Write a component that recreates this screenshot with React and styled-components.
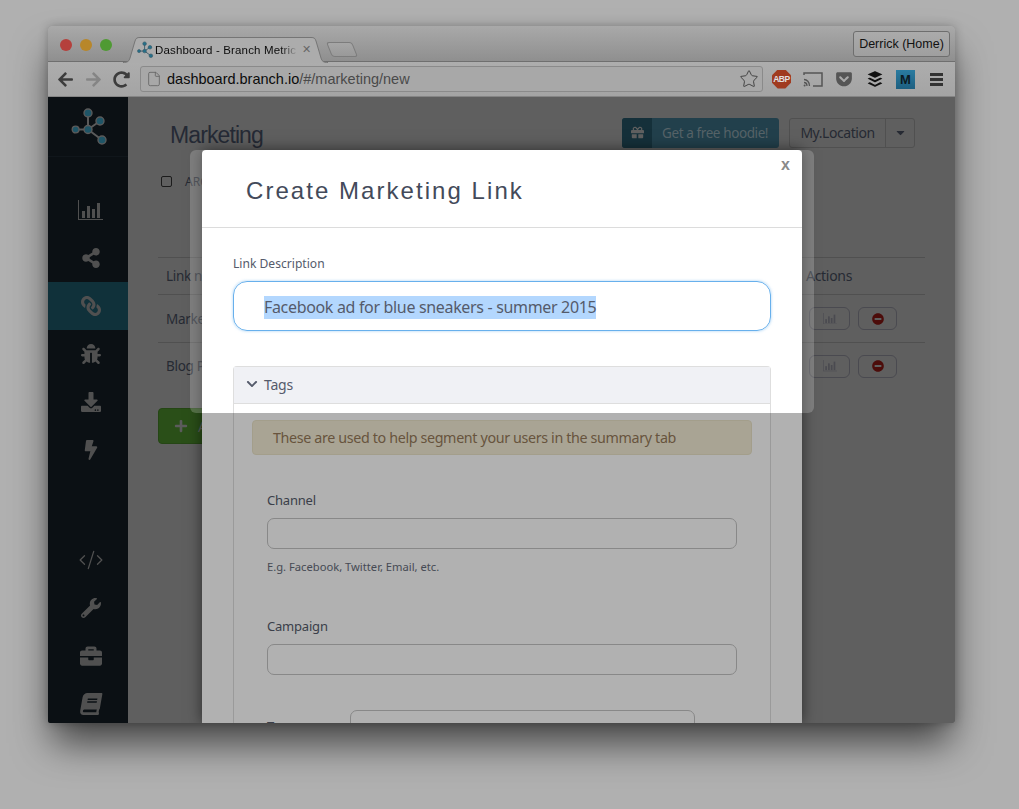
import styled, { createGlobalStyle } from 'styled-components';
import {
  FaArrowLeft,
  FaArrowRight,
  FaBolt,
  FaBook,
  FaBriefcase,
  FaBug,
  FaBuffer,
  FaCaretDown,
  FaChevronDown,
  FaDownload,
  FaGetPocket,
  FaGift,
  FaLink,
  FaMinusCircle,
  FaPlus,
  FaRedoAlt,
  FaShareAlt,
  FaWrench,
} from 'react-icons/fa';
import { CodeXml, File, Star } from 'lucide-react';

const bodyFont = `'Noto Sans', 'Liberation Sans', sans-serif`;

const GlobalStyle = createGlobalStyle`
  html, body {
    margin: 0;
    background: #b0b0b0;
    height: 809px;
    overflow: hidden;
  }
  * { box-sizing: border-box; }
`;

const Page = styled.div`
  padding: 26px 0 0 48px;
`;

const Window = styled.div`
  width: 907px;
  height: 697px;
  border-radius: 5px 5px 2px 2px;
  box-shadow: 0 24px 38px -4px rgba(0, 0, 0, 0.62), 0 0 10px rgba(0, 0, 0, 0.25);
  display: flex;
  flex-direction: column;
  overflow: hidden;
`;

const TitleBar = styled.div`
  height: 36px;
  flex: none;
  background: linear-gradient(#a9a9a9, #8f8f8f);
  border-bottom: 1px solid #6f6f6f;
  display: flex;
  align-items: flex-end;
  padding: 0 5px 0 12px;
`;

const Light = styled.span`
  width: 12px;
  height: 12px;
  border-radius: 50%;
  background: ${(p) => p.$color};
  margin-right: 8px;
  align-self: center;
  flex: none;
  position: relative;
  top: 1px;
`;

const Tab = styled.div`
  width: 198px;
  height: 25px;
  margin: 0 0 -1px 8px;
  position: relative;
  display: flex;
  align-items: center;
  padding-left: 9px;
  font: 11.5px 'Liberation Sans', sans-serif;
  letter-spacing: 0.15px;
  color: #0c0c0c;
  & > * {
    position: relative;
  }
`;

const TabShape = styled.svg`
  && {
    position: absolute;
  }
  left: -5px;
  top: 0;
`;

const TabTitle = styled.span`
  width: 143px;
  flex: none;
  margin-left: 1px;
  white-space: nowrap;
  overflow: hidden;
  -webkit-mask-image: linear-gradient(to right, #000 88%, transparent);
  mask-image: linear-gradient(to right, #000 88%, transparent);
`;

const TabClose = styled.span`
  margin-left: 4px;
  font-size: 11px;
  color: #666;
`;

const NewTab = styled.div`
  width: 26px;
  height: 15px;
  margin: 0 0 4px 3px;
  background: linear-gradient(#a6a6a6, #999);
  border: 1px solid #7c7c7c;
  border-radius: 3px;
  transform: skewX(22deg);
`;

const Profile = styled.div`
  margin: 0 0 4px auto;
  width: 97px;
  height: 26px;
  border: 1px solid #6e6e6e;
  border-radius: 3px;
  background: linear-gradient(#ababab, #9f9f9f);
  font: 12.5px/24px 'Liberation Sans', sans-serif;
  text-align: center;
  color: #111;
`;

const Toolbar = styled.div`
  height: 35px;
  flex: none;
  background: linear-gradient(#adadad, #a4a4a4);
  border-bottom: 1px solid #858585;
  display: flex;
  align-items: center;
  padding-left: 9px;
`;

const NavBtn = styled.span`
  width: 28px;
  flex: none;
  display: flex;
  color: ${(p) => p.$color || '#3c3c3c'};
  font-size: 17px;
`;

const Omnibox = styled.div`
  width: 623px;
  height: 26px;
  margin-left: -1px;
  flex: none;
  background: #a8a8a8;
  border: 1px solid #8a8a8a;
  border-radius: 3px;
  display: flex;
  align-items: center;
  padding: 0 3px 0 5px;
  color: #666;
`;

const Url = styled.span`
  margin-left: 5px;
  flex: 1;
  font: 14.5px 'Liberation Sans', sans-serif;
  color: #4a4a4a;
  b {
    font-weight: normal;
    color: #0c0c0c;
  }
`;

const ExtRow = styled.div`
  display: flex;
  align-items: center;
  margin-left: 3px;
`;

const Ext = styled.span`
  width: 31px;
  display: flex;
  justify-content: center;
  align-items: center;
  color: ${(p) => p.$color || '#111'};
`;

const Abp = styled.span`
  width: 19px;
  height: 19px;
  background: #a03b20;
  clip-path: polygon(30% 0, 70% 0, 100% 30%, 100% 70%, 70% 100%, 30% 100%, 0 70%, 0 30%);
  color: #e0e0e0;
  font: bold 8.5px/19px 'Liberation Sans', sans-serif;
  letter-spacing: -0.4px;
  text-align: center;
`;

const MBadge = styled.span`
  width: 19px;
  height: 19px;
  background: linear-gradient(#2a7ba0, #1d5f80);
  color: #0b1a22;
  font: bold 13px/19px 'Liberation Sans', sans-serif;
  text-align: center;
`;

const Burger = styled.span`
  width: 13px;
  height: 13px;
  border-top: 3px solid #333;
  border-bottom: 3px solid #333;
  position: relative;
  &::after {
    content: '';
    position: absolute;
    left: 0;
    right: 0;
    top: 2px;
    height: 3px;
    background: #333;
  }
`;

const Content = styled.div`
  flex: 1;
  min-height: 0;
  display: flex;
  position: relative;
  background: #5f5f5f;
  font-family: ${bodyFont};
`;

const Sidebar = styled.nav`
  width: 80px;
  flex: none;
  background: #0b1014;
  overflow: hidden;
`;

const LogoBox = styled.div`
  height: 60px;
  border-bottom: 1px solid #10161b;
  display: flex;
  padding: 10px 0 0 23px;
  margin-bottom: 29px;
`;

const NavGroup = styled.div`
  margin-top: ${(p) => p.$top || 0}px;
`;

const NavItem = styled.div`
  height: 48px;
  display: flex;
  align-items: center;
  justify-content: center;
  padding-left: 5px;
  background: ${(p) => (p.$active ? '#10313a' : 'transparent')};
  color: #505050;
  font-size: ${(p) => p.$size || 20}px;
`;

const Main = styled.main`
  flex: 1;
  min-width: 0;
  padding: 20px 30px 0 30px;
  color: #262a33;
`;

const HeadRow = styled.div`
  display: flex;
  align-items: center;
  height: 31px;
  margin: 0 10px 0 12px;
  gap: 10px;
`;

const PageTitle = styled.h1`
  margin: 5px auto 0 0;
  font: normal 23px 'Liberation Sans', sans-serif;
  letter-spacing: -0.9px;
  color: #252a35;
`;

const Hoodie = styled.div`
  width: 157px;
  height: 30px;
  display: flex;
  border-radius: 3px;
  overflow: hidden;
  background: #22404c;
  color: #566368;
  font-size: 13.5px;
  letter-spacing: -0.4px;
  line-height: 30px;
  white-space: nowrap;
`;

const HoodieIcon = styled.span`
  width: 30px;
  background: #15303a;
  color: #606060;
  display: flex;
  align-items: center;
  justify-content: center;
  margin-right: 10px;
  font-size: 13px;
`;

const Dropdown = styled.div`
  width: 126px;
  height: 30px;
  display: flex;
  border: 1px solid #505050;
  border-radius: 3px;
  font-size: 14px;
  letter-spacing: -0.45px;
  line-height: 28px;
  color: #262a33;
`;

const DropLabel = styled.span`
  width: 96px;
  text-align: center;
  border-right: 1px solid #505050;
`;

const DropCaret = styled.span`
  flex: 1;
  display: flex;
  align-items: center;
  justify-content: center;
  font-size: 13px;
`;

const CheckRow = styled.div`
  display: flex;
  align-items: center;
  gap: 13px;
  margin: 21px 0 0 3px;
  height: 24px;
  font-size: 12px;
`;

const CheckBox = styled.span`
  width: 11px;
  height: 11px;
  border: 1.5px solid #1c1c1c;
  border-radius: 2px;
`;

const Table = styled.div`
  margin-top: 64px;
  border-top: 1px solid #505050;
`;

const TableRow = styled.div`
  display: flex;
  align-items: center;
  height: ${(p) => p.$height}px;
  padding-left: 8px;
  padding-bottom: ${(p) => (p.$last ? 2 : 0)}px;
  font-size: 13.5px;
  letter-spacing: -0.3px;
  border-bottom: ${(p) => (p.$last ? 'none' : '1px solid #505050')};
`;

const Actions = styled.div`
  margin-left: auto;
  width: 116px;
  display: flex;
  gap: 8px;
`;

const ActionsLabel = styled.span`
  margin-left: auto;
  width: 119px;
  margin-top: -2px;
  font-size: 14px;
`;

const ActionBtn = styled.span`
  height: 23px;
  width: ${(p) => p.$width}px;
  border: 1px solid #4a4a50;
  border-radius: 6px;
  display: flex;
  align-items: center;
  justify-content: center;
  color: ${(p) => p.$color};
  font-size: 12px;
`;

const AddButton = styled.div`
  margin-top: 17px;
  width: 120px;
  height: 36px;
  background: #2a4f18;
  border: 1px solid #254615;
  border-radius: 4px;
  display: flex;
  align-items: center;
  padding-left: 15px;
  gap: 10px;
  color: #5c5c5c;
  font-size: 14px;
`;

const Modal = styled.div`
  position: absolute;
  left: 154px;
  top: 53px;
  bottom: 0;
  width: 600px;
  z-index: 1;
  box-shadow: 0 0 14px rgba(0, 0, 0, 0.55);
  &::before {
    content: '';
    position: absolute;
    z-index: -1;
    left: -12px;
    right: -12px;
    top: 0;
    height: 263px;
    background: rgba(255, 255, 255, 0.2);
    border-radius: 6px;
  }
`;

const ModalPanel = styled.div`
  height: 100%;
  background: #fff;
  border-radius: 4px 4px 0 0;
  overflow: hidden;
  position: relative;
  color: #3b4150;
`;

const ModalHead = styled.div`
  height: 78px;
  border-bottom: 1px solid #dcdcdc;
  padding: 26px 0 0 44px;
  position: relative;
`;

const ModalTitle = styled.h2`
  margin: 0;
  font: normal 24px/30px 'Liberation Sans', sans-serif;
  letter-spacing: 2.05px;
  color: #434a5a;
`;

const CloseX = styled.span`
  position: absolute;
  top: 6px;
  right: 12px;
  font: bold 16px 'Liberation Sans', sans-serif;
  color: #8a8a8a;
`;

const ModalBody = styled.div`
  padding: 27px 31px 0 31px;
`;

const Label = styled.div`
  font-size: 12.1px;
  line-height: 18px;
  color: #555b6b;
`;

const FocusInput = styled.div`
  margin-top: 8px;
  height: 50px;
  border: 1px solid #68b0ec;
  border-radius: 14px;
  box-shadow: 0 0 3px rgba(104, 176, 236, 0.6);
  padding: 2px 0 0 30px;
  display: flex;
  align-items: center;
`;

const Selected = styled.span`
  background: #b3d7fe;
  font-size: 16px;
  line-height: 23px;
  letter-spacing: -0.33px;
  color: #555b6b;
`;

const TagsPanel = styled.section`
  margin-top: 35px;
  border: 1px solid #dedede;
  border-bottom: none;
  border-radius: 4px 4px 0 0;
  height: 400px;
`;

const TagsHead = styled.div`
  height: 37px;
  background: #f0f1f5;
  border-bottom: 1px solid #dedede;
  display: flex;
  align-items: center;
  padding: 0 0 2px 12px;
  gap: 6px;
  font-size: 14px;
  letter-spacing: -0.2px;
  color: #555b6b;
`;

const TagsBody = styled.div`
  padding: 16px 18px 0;
`;

const Alert = styled.div`
  height: 35px;
  background: #f4edd5;
  border: 1px solid #ebe4c8;
  border-radius: 4px;
  padding-left: 20px;
  font-size: 14.3px;
  line-height: 33px;
  letter-spacing: -0.36px;
  color: #967a5a;
`;

const Field = styled.div`
  padding: 0 15px;
  margin-top: ${(p) => p.$top}px;
`;

const FieldLabel = styled.div`
  font-size: 13px;
  line-height: 18px;
  letter-spacing: -0.2px;
  color: #555b6b;
`;

const TextBox = styled.div`
  height: 31px;
  margin-top: 9px;
  border: 1px solid #c4c4c4;
  border-radius: 7px;
`;

const Hint = styled.div`
  margin-top: 9px;
  font-size: 11.2px;
  line-height: 18px;
  color: #666c7a;
`;

const InlineField = styled.div`
  display: flex;
  align-items: flex-start;
  padding: 0 15px;
  margin-top: 35px;
`;

const InlineLabel = styled.div`
  width: 83px;
  padding-top: 7px;
  font-size: 13px;
  color: #555b6b;
`;

const InlineBox = styled(TextBox)`
  width: 345px;
  margin-top: 0;
`;

const Dim = styled.div`
  position: absolute;
  left: 0;
  right: 0;
  top: 263px;
  bottom: 0;
  background: rgba(0, 0, 0, 0.305);
`;

function BranchLogo({ size, stroke, fill }) {
  return (
    <svg width={size} height={size} viewBox="0 0 36 38">
      <g stroke={stroke} strokeWidth="2" fill="none">
        <path d="M16 6V22.5M3 22.5H16L30 33M16 22.5L28 14" />
      </g>
      <g fill={fill} stroke={stroke} strokeWidth="1.4">
        <circle cx="16" cy="6" r="4" />
        <circle cx="3.6" cy="22.5" r="3.4" />
        <circle cx="16" cy="22.5" r="4" />
        <circle cx="28" cy="14" r="4" />
        <circle cx="30" cy="33" r="4" />
      </g>
    </svg>
  );
}

function ChartIcon({ size, color }) {
  return (
    <svg width={size} height={size * 0.8} viewBox="0 0 25 20" fill={color}>
      <path d="M0 0H1V19H25V20H0Z" />
      <rect x="4" y="11" width="3" height="7" />
      <rect x="9" y="6" width="3" height="12" />
      <rect x="14" y="9" width="3" height="9" />
      <rect x="19" y="3" width="3" height="15" />
    </svg>
  );
}

function CastIcon() {
  return (
    <svg width="20" height="15" viewBox="0 0 20 15" fill="none" stroke="#555">
      <path d="M1 3V1H19V14H10" strokeWidth="1.5" />
      <path d="M1 7.5C4 7.5 6.5 10 6.5 14M1 10.5C2.8 10.5 4 12 4 14" strokeWidth="1.3" />
      <circle cx="1.6" cy="13.4" r="1" fill="#555" stroke="none" />
    </svg>
  );
}

export default function App() {
  return (
    <Page>
      <GlobalStyle />
      <Window>
        <TitleBar>
          <Light $color="#b5403c" />
          <Light $color="#b8872a" />
          <Light $color="#4f9a33" />
          <Tab>
            <TabShape width="205" height="26" viewBox="0 0 205 26">
              <path
                d="M0 25.5C5 25.5 6 24 7 21L12 4C13 1 14 .5 17 .5H188C191 .5 192 1 193 4L198 21C199 24 200 25.5 205 25.5"
                fill="#acacac"
                stroke="#757575"
              />
            </TabShape>
            <BranchLogo size={17} stroke="#3a5a68" fill="#25708a" />
            <TabTitle>Dashboard - Branch Metric</TabTitle>
            <TabClose>✕</TabClose>
          </Tab>
          <NewTab />
          <Profile>Derrick (Home)</Profile>
        </TitleBar>
        <Toolbar>
          <NavBtn><FaArrowLeft /></NavBtn>
          <NavBtn $color="#858585"><FaArrowRight /></NavBtn>
          <NavBtn><FaRedoAlt /></NavBtn>
          <Omnibox>
            <File size={16} strokeWidth={1.3} />
            <Url><b>dashboard.branch.io</b>/#/marketing/new</Url>
            <Star size={20} strokeWidth={1.2} color="#444" />
          </Omnibox>
          <ExtRow>
            <Ext><Abp>ABP</Abp></Ext>
            <Ext><CastIcon /></Ext>
            <Ext $color="#555"><FaGetPocket size={18} /></Ext>
            <Ext><FaBuffer size={18} /></Ext>
            <Ext><MBadge>M</MBadge></Ext>
            <Ext><Burger /></Ext>
          </ExtRow>
        </Toolbar>
        <Content>
          <Sidebar>
            <LogoBox>
              <BranchLogo size={38} stroke="#5a5a5a" fill="#1f5567" />
            </LogoBox>
            <NavGroup>
              <NavItem><ChartIcon size={25} color="#505050" /></NavItem>
              <NavItem><FaShareAlt /></NavItem>
              <NavItem $active><FaLink style={{ transform: 'scaleX(-1)' }} /></NavItem>
              <NavItem><FaBug /></NavItem>
              <NavItem><FaDownload /></NavItem>
              <NavItem><FaBolt /></NavItem>
            </NavGroup>
            <NavGroup $top={62}>
              <NavItem><CodeXml size={26} strokeWidth={1.2} /></NavItem>
              <NavItem><FaWrench /></NavItem>
              <NavItem $size={22}><FaBriefcase /></NavItem>
              <NavItem $size={22}><FaBook style={{ transform: 'skewX(-10deg)' }} /></NavItem>
            </NavGroup>
          </Sidebar>
          <Main>
            <HeadRow>
              <PageTitle>Marketing</PageTitle>
              <Hoodie>
                <HoodieIcon><FaGift /></HoodieIcon>
                Get a free hoodie!
              </Hoodie>
              <Dropdown>
                <DropLabel>My.Location</DropLabel>
                <DropCaret><FaCaretDown /></DropCaret>
              </Dropdown>
            </HeadRow>
            <CheckRow>
              <CheckBox />
              ARCHIVED
            </CheckRow>
            <Table>
              <TableRow $height={37}>
                Link name
                <ActionsLabel>Actions</ActionsLabel>
              </TableRow>
              <TableRow $height={48}>
                Marketing
                <Actions>
                  <ActionBtn $width={41}><ChartIcon size={14} color="#4a4a50" /></ActionBtn>
                  <ActionBtn $width={39} $color="#4c0c0a"><FaMinusCircle /></ActionBtn>
                </Actions>
              </TableRow>
              <TableRow $height={48} $last>
                Blog Post
                <Actions>
                  <ActionBtn $width={41}><ChartIcon size={14} color="#4a4a50" /></ActionBtn>
                  <ActionBtn $width={39} $color="#4c0c0a"><FaMinusCircle /></ActionBtn>
                </Actions>
              </TableRow>
            </Table>
            <AddButton>
              <FaPlus />
              Add
            </AddButton>
          </Main>
          <Modal>
            <ModalPanel>
              <ModalHead>
                <ModalTitle>Create Marketing Link</ModalTitle>
                <CloseX>x</CloseX>
              </ModalHead>
              <ModalBody>
                <Label>Link Description</Label>
                <FocusInput>
                  <Selected>Facebook ad for blue sneakers - summer 2015</Selected>
                </FocusInput>
                <TagsPanel>
                  <TagsHead>
                    <FaChevronDown size={12} />
                    Tags
                  </TagsHead>
                  <TagsBody>
                    <Alert>These are used to help segment your users in the summary tab</Alert>
                    <Field $top={36}>
                      <FieldLabel>Channel</FieldLabel>
                      <TextBox />
                      <Hint>E.g. Facebook, Twitter, Email, etc.</Hint>
                    </Field>
                    <Field $top={41}>
                      <FieldLabel>Campaign</FieldLabel>
                      <TextBox />
                    </Field>
                    <InlineField>
                      <InlineLabel>Tags</InlineLabel>
                      <InlineBox />
                    </InlineField>
                  </TagsBody>
                </TagsPanel>
              </ModalBody>
              <Dim />
            </ModalPanel>
          </Modal>
        </Content>
      </Window>
    </Page>
  );
}
